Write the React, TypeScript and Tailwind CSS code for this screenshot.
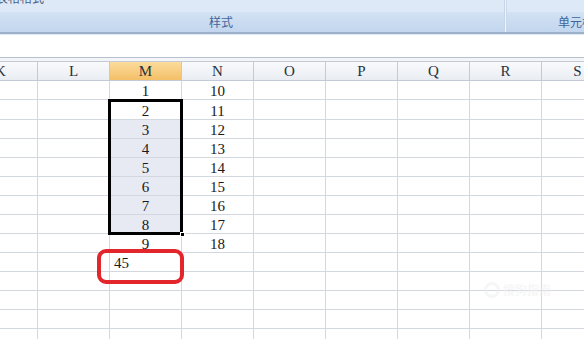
import React from 'react';

const cols = ['K', 'L', 'M', 'N', 'O', 'P', 'Q', 'R', 'S'];
const rowHeights = [19, 20, 19, 19, 19, 19, 19, 19, 19, 19, 19, 19, 19, 19];
const mVals = ['1', '2', '3', '4', '5', '6', '7', '8', '9', '45'];
const nVals = ['10', '11', '12', '13', '14', '15', '16', '17', '18'];

function colWidth(i: number) {
  return i === 0 ? 'w-[38px]' : 'w-[72px]';
}

export default function App() {
  return (
    <div className="relative w-[584px] h-[339px] overflow-hidden bg-white" style={{ fontFamily: '"Liberation Serif", serif' }}>
      {/* Ribbon */}
      <div className="relative h-[32px] bg-[#c9dbf1]">
        <div className="h-[12px] bg-[#dde9f7] overflow-hidden flex">
          <div className="w-[505px] overflow-hidden">
            <div className="-mt-[9px] ml-[-4px] text-[12px] leading-[14px] text-[#4a5f7e]" style={{ fontFamily: '"Noto Sans CJK SC", sans-serif' }}>
              表格格式
            </div>
          </div>
        </div>
        <div className="h-[20px] flex bg-gradient-to-b from-[#d3e2f4] to-[#c2d6ee]">
          <div className="w-[505px] flex items-center pl-[209px] text-[12px] text-[#40659a]" style={{ fontFamily: '"Noto Sans CJK SC", sans-serif' }}>
            样式
          </div>
        </div>
        <div className="absolute left-[504px] top-0 h-[32px] w-[3px] bg-gradient-to-r from-[#b3c6dd] via-[#eef4fb] to-[#b8cbe2]" />
        <div className="absolute left-[558px] top-[12px] h-[20px] flex items-center text-[12px] text-[#40659a] whitespace-nowrap" style={{ fontFamily: '"Noto Sans CJK SC", sans-serif' }}>
          单元格
        </div>
      </div>
      <div className="h-[2px] bg-[#9cb1ca]" />
      <div className="h-[1px] bg-[#dfe7f1]" />
      {/* Formula bar area */}
      <div className="h-[22px] bg-white" />
      <div className="h-[1px] bg-[#b5c1cf]" />
      <div className="h-[3px] bg-[#f3f5f8]" />
      {/* Header row */}
      <div className="flex h-[20px] border-y border-[#c3cad5]">
        {cols.map((c, i) => (
          <div
            key={c}
            className={`${colWidth(i)} shrink-0 border-r border-[#c3cad5] flex items-center justify-center pt-[1px] text-[15px] text-[#27313f] ${
              c === 'M' ? 'bg-gradient-to-b from-[#fbdc9c] to-[#f4bf66]' : 'bg-gradient-to-b from-[#f9fafc] to-[#e9edf3]'
            } ${i === 0 ? 'justify-start pl-0' : ''}`}
          >
            {i === 0 ? <span className="-ml-[5px]">{c}</span> : c}
          </div>
        ))}
      </div>
      {/* Grid */}
      <div className="flex flex-col">
        {rowHeights.map((h, r) => (
          <div key={r} className={`flex shrink-0 ${h === 20 ? 'h-[20px]' : 'h-[19px]'}`}>
            {cols.map((c, i) => {
              const selFill = c === 'M' && r >= 2 && r <= 7;
              let content: React.ReactNode = null;
              let align = 'justify-center';
              if (c === 'M' && r < mVals.length) {
                content = mVals[r];
                if (r === 9) align = 'justify-start pl-[4px]';
              }
              if (c === 'N' && r < nVals.length) content = nVals[r];
              return (
                <div
                  key={c}
                  className={`${colWidth(i)} shrink-0 border-r border-b border-[#d3d7df] flex items-center pt-[3px] ${align} text-[15px] leading-none text-[#1a1a1a] ${
                    selFill ? 'bg-[#e7e9f3]' : 'bg-white'
                  }`}
                >
                  {content}
                </div>
              );
            })}
          </div>
        ))}
      </div>
      {/* Selection box */}
      <div className="absolute left-[108px] top-[99px] w-[75px] h-[136px] border-[3px] border-black" />
      <div className="absolute left-[180px] top-[232px] w-[5px] h-[5px] bg-black border border-white" />
      {/* Red annotation */}
      <div className="absolute left-[97px] top-[249px] w-[87px] h-[35px] border-[4px] border-[#e2262c] rounded-[9px]" />
      {/* Watermark */}
      <div className="absolute left-[484px] top-[281px] flex items-center gap-[3px] opacity-50">
        <div className="w-[16px] h-[16px] rounded-full border-[3px] border-[#efefef]" />
        <div className="text-[12px] text-[#efefef] font-bold" style={{ fontFamily: '"Noto Sans CJK SC", sans-serif' }}>
          搜狗指南
        </div>
      </div>
    </div>
  );
}
